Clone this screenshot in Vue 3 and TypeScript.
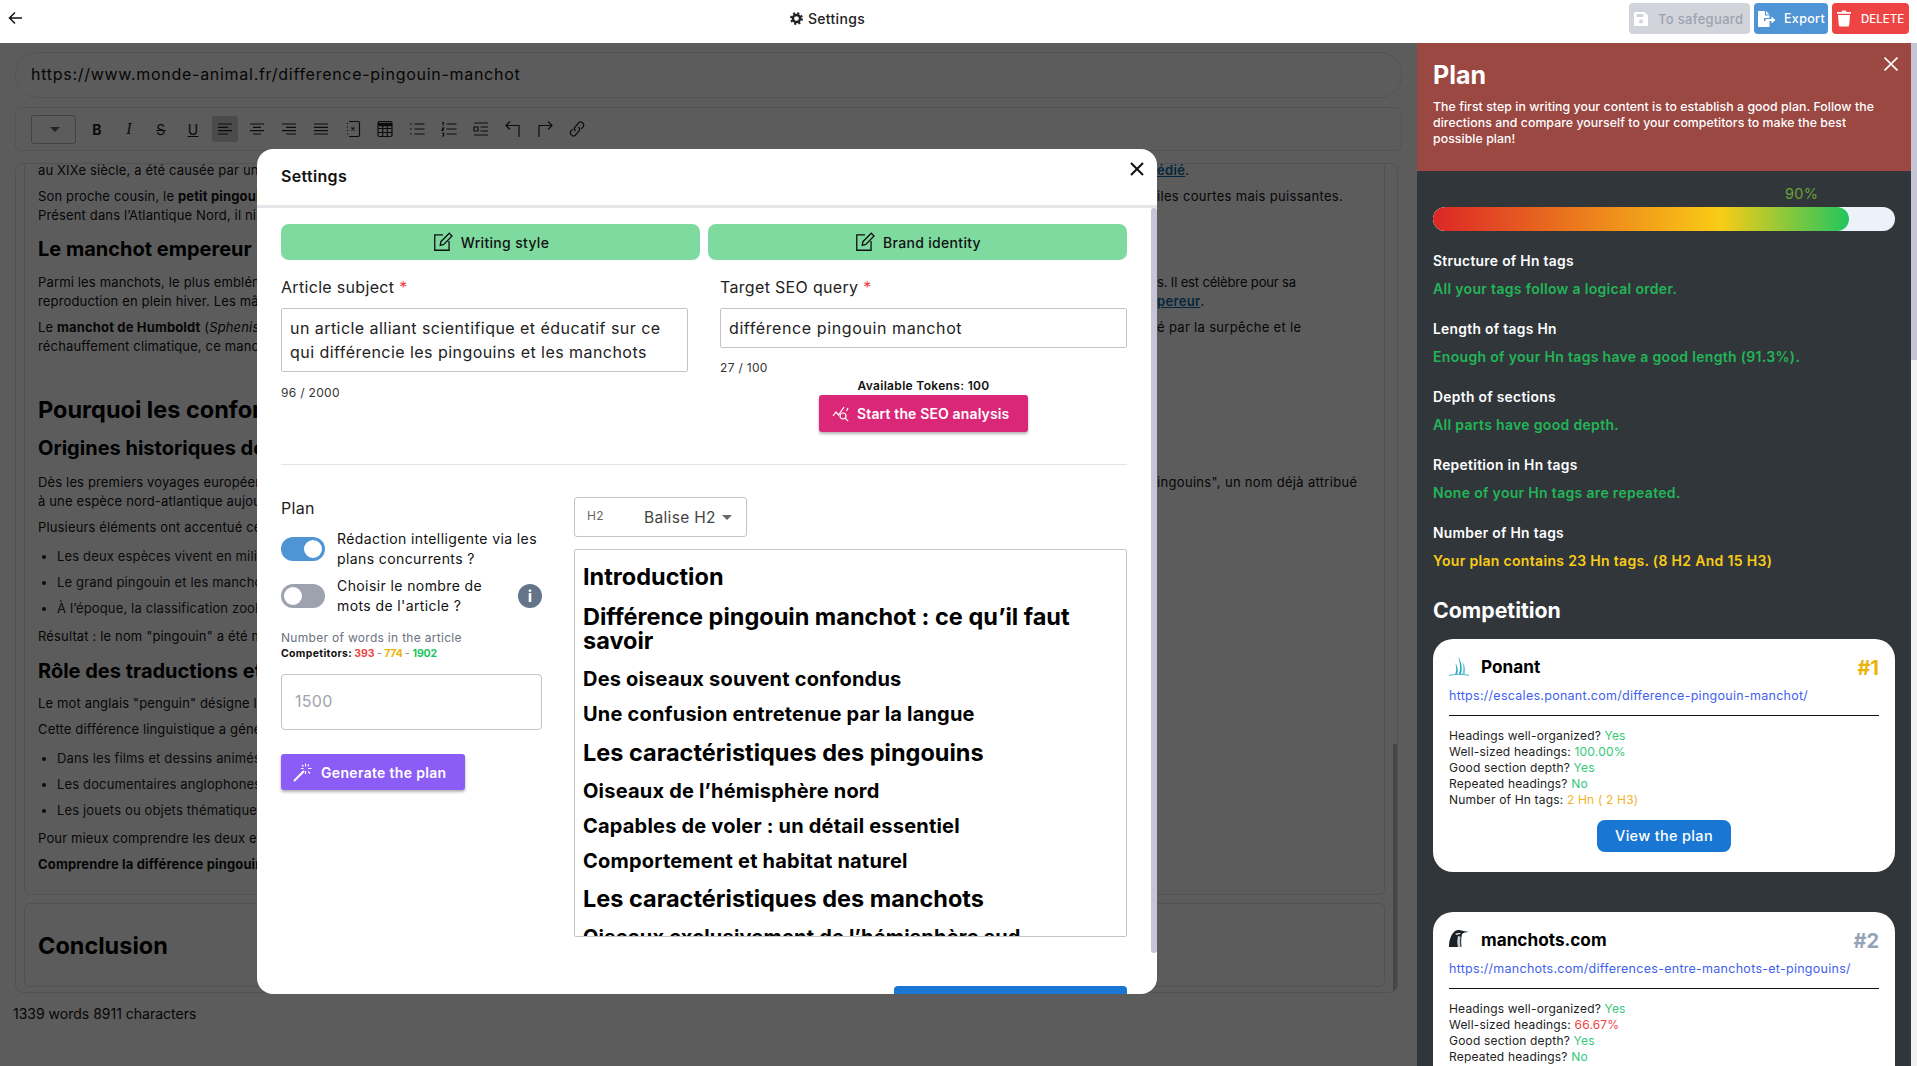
<script setup lang="ts">
const tools: string[] = [
    'M5 7h14M5 10.3h10M5 13.6h14M5 17h10',
    'M5 7h14M8 10.3h8M5 13.6h14M8 17h8',
    'M5 7h14M9 10.3h10M5 13.6h14M9 17h10',
    'M5 7h14M5 10.3h14M5 13.6h14M5 17h14',
    'M8 4.5h9a1.5 1.5 0 0 1 1.5 1.5v12a1.5 1.5 0 0 1-1.5 1.5H8M6.5 6v1M6.5 9.5v1M6.5 13v1M6.5 16.5v1M10.5 10.5l3 3M13.5 10.5l-3 3',
]
const tools2: string[] = [
    'M9.5 7h10M9.5 12h10M9.5 17h10M5 7h1.6M5 12h1.6M5 17h1.6',
    'M9.5 7h10M9.5 12h10M9.5 17h10M5 5.5h1.2v3M5 11h1.6l-1.6 2.4h1.6M5 16h1.6v3H5',
    'M5 6h14M11.5 10h7.5M11.5 14h7.5M5 18h14M5 10h4v4H5z',
    'M9 4.5L5 8.5l4 4M5 8.5h13V20',
    'M15 4.5l4 4-4 4M19 8.5H6V20',
    'M10.5 14a3 3 0 0 1-.4-4.2l3.6-4a3 3 0 0 1 4.4 4l-1.8 2M13.5 10a3 3 0 0 1 .4 4.2l-3.6 4a3 3 0 0 1-4.4-4l1.8-2',
]

const tags: { level: number, text: string }[] = [
    { level: 2, text: 'Introduction' },
    { level: 2, text: 'Différence pingouin manchot : ce qu’il faut savoir' },
    { level: 3, text: 'Des oiseaux souvent confondus' },
    { level: 3, text: 'Une confusion entretenue par la langue' },
    { level: 2, text: 'Les caractéristiques des pingouins' },
    { level: 3, text: 'Oiseaux de l’hémisphère nord' },
    { level: 3, text: 'Capables de voler : un détail essentiel' },
    { level: 3, text: 'Comportement et habitat naturel' },
    { level: 2, text: 'Les caractéristiques des manchots' },
    { level: 3, text: 'Oiseaux exclusivement de l’hémisphère sud' },
]

const criteria = [
    { title: 'Structure of Hn tags', text: 'All your tags follow a logical order.', tone: 'good' },
    { title: 'Length of tags Hn', text: 'Enough of your Hn tags have a good length (91.3%).', tone: 'good' },
    { title: 'Depth of sections', text: 'All parts have good depth.', tone: 'good' },
    { title: 'Repetition in Hn tags', text: 'None of your Hn tags are repeated.', tone: 'good' },
    { title: 'Number of Hn tags', text: 'Your plan contains 23 Hn tags. (8 H2 And 15 H3)', tone: 'warn' },
]

const competitors = [
    {
        name: 'Ponant', rank: '#1', rankClass: 'gold', logo: 'ponant',
        url: 'https://escales.ponant.com/difference-pingouin-manchot/',
        sized: '100.00%', sizedClass: 'yes', hn: '2 Hn ( 2 H3)', button: true,
    },
    {
        name: 'manchots.com', rank: '#2', rankClass: 'silver', logo: 'penguin',
        url: 'https://manchots.com/differences-entre-manchots-et-pingouins/',
        sized: '66.67%', sizedClass: 'bad', hn: '6 Hn ( 6 H2)', button: false,
    },
]
</script>

<template>
    <div class="page">
        <header class="topbar">
            <button class="back" type="button" aria-label="Back">
                <svg width="16" height="16" viewBox="0 0 16 16" fill="none" stroke="#111" stroke-width="1.5"><path d="M8 2.5L2.5 8 8 13.5M2.5 8H15"/></svg>
            </button>
            <div class="page-title">
                <svg width="13" height="13" viewBox="0 0 16 16"><circle cx="8" cy="8" r="4.4" fill="none" stroke="#222" stroke-width="3"/><circle cx="8" cy="8" r="6.6" fill="none" stroke="#222" stroke-width="2.6" stroke-dasharray="2.6 2.6"/></svg>
                <span>Settings</span>
            </div>
            <div class="actions">
                <button class="act act-save" type="button">
                    <svg width="16" height="16" viewBox="0 0 16 16"><path fill="#fff" d="M1 2.5A1.5 1.5 0 0 1 2.5 1h9L15 4.5v9a1.5 1.5 0 0 1-1.5 1.5h-11A1.5 1.5 0 0 1 1 13.500z"/><rect x="3.500" y="3" width="7" height="3" fill="#d1d5db"/><circle cx="8" cy="10.500" r="2" fill="#d1d5db"/></svg>
                    To safeguard
                </button>
                <button class="act act-export" type="button">
                    <svg width="19" height="16" viewBox="0 0 19 16"><path fill="#fff" d="M1 0h7v4.500h4.500V7H7v3h5.500v6H1zM9 0l3.500 3.500H9zM8.500 8h6V5.500l4 3.500-4 3.500V10h-6z"/></svg>
                    Export
                </button>
                <button class="act act-delete" type="button">
                    <svg width="16" height="17" viewBox="0 0 16 17"><path fill="#fff" d="M1 2h4.500l.7-1.500h3.600l.7 1.500H15v1.800H1zM2 5h12l-.8 10.500a1.500 1.500 0 0 1-1.500 1H4.300a1.500 1.500 0 0 1-1.500-1z"/></svg>
                    DELETE
                </button>
            </div>
        </header>

        <div class="workspace">
            <main class="content">
                <div class="url-field">https://www.monde-animal.fr/difference-pingouin-manchot</div>

                <div class="toolbar">
                    <div class="tb-select"><i class="caret"></i></div>
                    <span class="tb-btn tb-b">B</span>
                    <span class="tb-btn tb-i">I</span>
                    <span class="tb-btn tb-s">S</span>
                    <span class="tb-btn tb-u">U</span>
                    <span v-for="(d, i) in tools" :key="d" class="tb-btn" :class="{ active: i === 0 }">
                        <svg width="24" height="24" viewBox="0 0 24 24" fill="none" stroke="#222" stroke-width="1.2"><path :d="d"/></svg>
                    </span>
                    <span class="tb-btn">
                        <svg width="24" height="24" viewBox="0 0 24 24" fill="none" stroke="#222" stroke-width="1.2"><rect x="5" y="4.500" width="14" height="15" rx="1.500"/><path d="M5 7.500h14" stroke-width="3.500"/><path d="M5 11.500h14M5 15.500h14M9.700 6v13.500M14.300 6v13.500"/></svg>
                    </span>
                    <span v-for="d in tools2" :key="d" class="tb-btn">
                        <svg width="24" height="24" viewBox="0 0 24 24" fill="none" stroke="#222" stroke-width="1.2"><path :d="d"/></svg>
                    </span>
                </div>

                <div class="editor">
                    <section class="doc doc-main">
                        <div class="ln first"><span>au XIXe siècle, a été causée par un</span><span class="rest"><a>édié</a>.</span></div>
                        <div class="para">
                            <div class="ln"><span>Son proche cousin, le <b>petit pingouin</b></span><span class="rest">iles courtes mais puissantes.</span></div>
                            <div class="ln"><span>Présent dans l’Atlantique Nord, il niche</span></div>
                        </div>
                        <h3>Le manchot empereur</h3>
                        <div class="para">
                            <div class="ln"><span>Parmi les manchots, le plus emblématique</span><span class="rest narrow">s. Il est célèbre pour sa</span></div>
                            <div class="ln"><span>reproduction en plein hiver. Les mâles</span><span class="rest"><a>pereur</a>.</span></div>
                        </div>
                        <div class="para">
                            <div class="ln"><span>Le <b>manchot de Humboldt</b> (<em>Spheniscus</em></span><span class="rest">é par la surpêche et le</span></div>
                            <div class="ln"><span>réchauffement climatique, ce manchot</span></div>
                        </div>
                        <h2>Pourquoi les confond-on</h2>
                        <h3 class="tight">Origines historiques de la</h3>
                        <div class="para">
                            <div class="ln"><span>Dès les premiers voyages européens</span><span class="rest">ingouins", un nom déjà attribué</span></div>
                            <div class="ln"><span>à une espèce nord-atlantique aujourd’hui</span></div>
                        </div>
                        <p>Plusieurs éléments ont accentué cette</p>
                        <ul>
                            <li>Les deux espèces vivent en milieu</li>
                            <li>Le grand pingouin et les manchots</li>
                            <li>À l’époque, la classification zoologique</li>
                        </ul>
                        <p>Résultat : le nom "pingouin" a été maintenu</p>
                        <h3>Rôle des traductions et</h3>
                        <p class="after-title">Le mot anglais "penguin" désigne les</p>
                        <p>Cette différence linguistique a généré</p>
                        <ul>
                            <li>Dans les films et dessins animés</li>
                            <li>Les documentaires anglophones</li>
                            <li>Les jouets ou objets thématiques</li>
                        </ul>
                        <p>Pour mieux comprendre les deux espèces</p>
                        <p><b>Comprendre la différence pingouin</b></p>
                    </section>
                    <section class="doc doc-end">
                        <h2>Conclusion</h2>
                    </section>
                    <div class="editor-thumb"></div>
                </div>

                <div class="word-count">1339 words 8911 characters</div>

                <div class="backdrop"></div>

                <div class="modal">
                    <div class="modal-head">
                        <h4>Settings</h4>
                        <svg class="modal-close" width="14" height="14" viewBox="0 0 14 14" stroke="#111" stroke-width="2"><path d="M1 1l12 12M13 1L1 13"/></svg>
                    </div>
                    <div class="modal-thumb"></div>
                    <div class="modal-body">
                        <div class="tabs">
                            <button v-for="t in ['Writing style', 'Brand identity']" :key="t" class="tab" type="button">
                                <svg width="22" height="22" viewBox="0 0 20 20" fill="none" stroke="#111" stroke-width="1.200"><path d="M10 3.500H2.500v14h13V9"/><path d="M7.500 13l.6-3.300 7.600-7.700 2.500 2.500-7.500 7.700z"/></svg>
                                {{ t }}
                            </button>
                        </div>

                        <div class="fields">
                            <div>
                                <label class="field-label">Article subject <em>*</em></label>
                                <div class="box box-area">un article alliant scientifique et éducatif sur ce<br>qui différencie les pingouins et les manchots</div>
                                <div class="counter counter-a">96 / 2000</div>
                            </div>
                            <div>
                                <label class="field-label">Target SEO query <em>*</em></label>
                                <div class="box box-line">différence pingouin manchot</div>
                                <div class="counter">27 / 100</div>
                                <div class="tokens">Available Tokens: 100</div>
                                <button class="seo-btn" type="button">
                                    <svg width="18" height="18" viewBox="0 0 18 18" fill="none" stroke="#fff" stroke-width="1.200"><path d="M1 11l3-4 2.500 3L12 2"/><circle cx="11" cy="11" r="3"/><path d="M13.200 13.200l3 3M14.500 6l1.500-3"/></svg>
                                    Start the SEO analysis
                                </button>
                            </div>
                        </div>

                        <hr class="divider">

                        <div class="plan-grid">
                            <div>
                                <div class="plan-label">Plan</div>
                                <div class="toggle-row">
                                    <span class="toggle on"><i></i></span>
                                    <span class="toggle-text">Rédaction intelligente via les<br>plans concurrents ?</span>
                                </div>
                                <div class="toggle-row second">
                                    <span class="toggle"><i></i></span>
                                    <span class="toggle-text">Choisir le nombre de<br>mots de l'article ?</span>
                                    <span class="info">i</span>
                                </div>
                                <div class="words-label">Number of words in the article</div>
                                <div class="competitors"><b>Competitors:</b> <b class="c-red">393</b> <span>-</span> <b class="c-gold">774</b> <span>-</span> <b class="c-green">1902</b></div>
                                <div class="box-num">1500</div>
                                <button class="gen-btn" type="button">
                                    <svg width="20" height="20" viewBox="0 0 20 20" fill="none" stroke="#fff"><path d="M1.500 18.500l9-9" stroke-width="2" stroke-linecap="round"/><path d="M12.500 1.500v3M12.500 9v3M8 6.500h2.500M15 6.500h3.500M9 3l1.500 1.500M16 2.500l-1.500 1.500M15 9.500l2 2" stroke-width="1.100"/></svg>
                                    Generate the plan
                                </button>
                            </div>
                            <div>
                                <div class="tag-select">
                                    <span class="tag-code">H2</span>
                                    <span class="tag-name">Balise H2</span>
                                    <i class="caret"></i>
                                </div>
                                <div class="outline">
                                    <div v-for="t in tags" :key="t.text" :class="`lvl${t.level}`">{{ t.text }}</div>
                                </div>
                            </div>
                        </div>

                        <div class="modal-foot">
                            <button class="next-btn" type="button"><i></i></button>
                        </div>
                    </div>
                </div>
            </main>

            <aside class="panel">
                <div class="panel-main">
                    <div class="panel-head">
                        <h1>Plan</h1>
                        <p>The first step in writing your content is to establish a good plan. Follow the directions and compare yourself to your competitors to make the best possible plan!</p>
                        <svg class="panel-close" width="14" height="14" viewBox="0 0 14 14" stroke="#fff" stroke-width="1.600"><path d="M.5.5l13 13M13.500.5l-13 13"/></svg>
                    </div>
                    <div class="panel-body">
                        <div class="pct">90%</div>
                        <div class="bar"><div class="bar-fill" :style="{ width: '90%' }"></div></div>

                        <div v-for="c in criteria" :key="c.title" class="crit">
                            <div class="crit-title">{{ c.title }}</div>
                            <div class="crit-text" :class="c.tone">{{ c.text }}</div>
                        </div>

                        <h2 class="comp-title">Competition</h2>

                        <article v-for="c in competitors" :key="c.name" class="card">
                            <div class="card-top">
                                <svg v-if="c.logo === 'ponant'" width="20" height="20" viewBox="0 0 20 20" fill="none">
                                    <path d="M0 19.300c6-1.200 13-1.200 20 0" stroke="#4fb8c8" stroke-width="1"/>
                                    <path d="M10 18c1.800-4 1.500-11-1-17.500 3.500 5 4.500 12 3 17.500z" fill="#1f9fb8"/>
                                    <path d="M6.300 18c1.200-3 1.200-7 0-11 2.600 3.500 3 7.500 2 11z" fill="#2fb0c6"/>
                                    <path d="M13.300 18c1.400-3 1.400-7-.2-12.500 3.200 4.500 3.600 9 2.500 12.500z" fill="#6ccad6"/>
                                </svg>
                                <svg v-else width="20" height="20" viewBox="0 0 20 20">
                                    <path d="M0 18c0-5 1-11 5-15 2-2 5-2.500 7-1.500 2 .5 5 .8 7.500 1.500-3 .2-5 .8-6.500 2-1 4-1 9-.5 13z" fill="#1c2226"/>
                                    <path d="M6 5c2-1 5-1.500 6-.5-1 .7-3 .8-4 1.500z" fill="#e8eaec"/>
                                    <path d="M9 7c1 0 2 .5 2.500 1-.5 3-.5 6 0 10H9c-1-3-1-7 0-11z" fill="#c9ced2"/>
                                </svg>
                                <span class="card-name">{{ c.name }}</span>
                                <span class="card-rank" :class="c.rankClass">{{ c.rank }}</span>
                            </div>
                            <a class="card-url">{{ c.url }}</a>
                            <hr>
                            <div class="card-stats">
                                <div>Headings well-organized? <span class="yes">Yes</span></div>
                                <div>Well-sized headings: <span :class="c.sizedClass">{{ c.sized }}</span></div>
                                <div>Good section depth? <span class="yes">Yes</span></div>
                                <div>Repeated headings? <span class="yes">No</span></div>
                                <div>Number of Hn tags: <span class="amber">{{ c.hn }}</span></div>
                            </div>
                            <button v-if="c.button" class="view-btn" type="button">View the plan</button>
                        </article>
                    </div>
                </div>
                <div class="panel-scroll"><div></div></div>
            </aside>
        </div>
    </div>
</template>

<style>
html, body { margin: 0; padding: 0; background: #fff; overflow: hidden; }
</style>

<style scoped>
.page {
    height: 1066px;
    display: flex;
    flex-direction: column;
    overflow: hidden;
    font-family: Inter, "Noto Sans", sans-serif;
    letter-spacing: .02em;
    color: #111;
}
button { font-family: inherit; letter-spacing: inherit; border: none; cursor: pointer; }
svg { flex: none; }

/* top bar */
.topbar {
    height: 43px;
    box-sizing: border-box;
    flex: none;
    display: flex;
    align-items: center;
    justify-content: space-between;
    background: #fff;
    padding: 0 8px 6px 7px;
}
.back { background: none; padding: 0; width: 17px; height: 17px; display: flex; }
.page-title { display: flex; align-items: center; gap: 5px; font-size: 14px; font-weight: 500; color: #222; margin-left: 2px; }
.actions { display: flex; gap: 4px; }
.act {
    height: 31px;
    display: flex;
    align-items: center;
    padding: 0 4px;
    border-radius: 4px;
    font-size: 12.500px;
    font-weight: 500;
    color: #fff;
}
.act-save { width: 121px; background: #d1d5db; color: #9ca3af; gap: 9px; font-size: 13px; }
.act-export { width: 74px; padding-left: 3px; background: #4f94d4; gap: 8px; }
.act-delete { width: 77px; background: #ef4444; gap: 9px; font-size: 11.500px; letter-spacing: 0; }

.workspace { flex: 1; display: flex; min-height: 0; }

/* left side */
.content {
    width: 1417px;
    flex: none;
    position: relative;
    overflow: hidden;
    background: #fff;
    padding: 9px 15px 0;
    box-sizing: border-box;
    font-size: 13px;
}
.url-field {
    height: 46px;
    box-sizing: border-box;
    width: 1387px;
    border: 1px solid #e5e7eb;
    border-radius: 22px;
    padding: 0 15px 2px;
    display: flex;
    align-items: center;
    font-size: 16px;
    letter-spacing: .72px;
    color: #111;
}
.toolbar {
    margin-top: 9px;
    height: 44px;
    width: 1387px;
    box-sizing: border-box;
    border: 1px solid #e5e7eb;
    border-radius: 6px;
    padding: 0 15px;
    display: flex;
    align-items: center;
    gap: 6px;
}
.tb-select {
    width: 45px;
    height: 29px;
    box-sizing: border-box;
    border: 1px solid #bbb;
    border-radius: 3px;
    margin-right: 2px;
    display: flex;
    align-items: center;
    justify-content: flex-end;
    padding-right: 15px;
}
.caret {
    width: 0;
    height: 0;
    border-left: 5px solid transparent;
    border-right: 5px solid transparent;
    border-top: 5px solid #666;
}
.tb-btn {
    width: 26px;
    height: 26px;
    border-radius: 3px;
    display: flex;
    align-items: center;
    justify-content: center;
    font-size: 14px;
    color: #222;
}
.tb-btn.active { background: #cfcfcf; }
.tb-b { font-weight: 700; }
.tb-i { font-style: italic; font-family: "Liberation Serif", serif; font-size: 16px; }
.tb-s { text-decoration: line-through; }
.tb-u { text-decoration: underline; }

.editor {
    margin-top: 12px;
    width: 1383px;
    height: 830px;
    box-sizing: border-box;
    border: 1px solid #e0e2e6;
    border-radius: 8px;
    padding: 0 12px 5px 8px;
    display: flex;
    flex-direction: column;
    gap: 8px;
    position: relative;
    overflow: hidden;
    line-height: 19px;
    color: #111;
}
.editor-thumb {
    position: absolute;
    right: -2px;
    top: 580px;
    width: 6px;
    height: 251px;
    background: #c4c4c4;
}
.doc { border: 1px solid #e0e2e6; border-radius: 6px; padding: 0 13px; box-sizing: border-box; }
.doc-main { height: 732px; border-top: none; border-radius: 0 0 6px 6px; overflow: hidden; }
.doc-end { height: 84px; display: flex; align-items: center; padding-top: 2px; }
.doc h2 { margin: 36px 0 0; font-size: 23.500px; line-height: 36px; font-weight: 700; color: #000; letter-spacing: 0; white-space: nowrap; }
.doc-end h2 { margin: 0; }
.doc h3 { margin: 10px 0 0; font-size: 20px; line-height: 30px; font-weight: 700; color: #000; letter-spacing: 0; white-space: nowrap; }
.doc h3.tight { margin-top: 5px; }
.doc p { margin: 7px 0 0; white-space: nowrap; letter-spacing: .15px; }
.doc ul + p { margin-top: 9px; }
.doc p.after-title { margin-top: 8px; }
.doc h3 + .para { margin-top: 9px; }
.doc h2 + h3 + .para { margin-top: 10px; }
.para { margin-top: 7px; }
.doc .para + h3 { margin-top: 9px; }
.ln { display: grid; grid-template-columns: 1119px auto; white-space: nowrap; }
.ln > span:first-child { letter-spacing: .15px; }
.ln.first { margin-top: -3px; }
.rest a { color: #0b6aa8; font-weight: 600; text-decoration: underline; }
.rest.narrow { letter-spacing: -.15px; }
.doc ul { margin: 10px 0 0; padding: 0 0 0 19px; color: #222; letter-spacing: .15px; }
.doc li { margin-top: 7px; white-space: nowrap; }
.doc li:first-child { margin-top: 0; }
.doc li::marker { font-size: 12px; }
.word-count { margin-top: 11px; margin-left: -2px; font-size: 14px; line-height: 20px; letter-spacing: 0; color: #111; }

.backdrop { position: absolute; inset: 0; background: rgba(0, 0, 0, .64); }

/* modal */
.modal {
    position: absolute;
    left: 257px;
    top: 106px;
    width: 900px;
    height: 845px;
    background: #fff;
    border-radius: 16px;
    overflow: hidden;
    font-size: 14px;
    color: #111;
}
.modal-head {
    height: 56px;
    border-bottom: 3px solid #e5e5ea;
    display: flex;
    align-items: center;
    justify-content: space-between;
    padding: 0 13px 0 24px;
}
.modal-head h4 { margin: 0 0 2px; font-size: 16px; font-weight: 600; }
.modal-close { margin-bottom: 17px; }
.modal-thumb { position: absolute; right: 0; top: 59px; width: 6px; height: 745px; background: #c5c5d5; border-radius: 3px; }
.modal-body { padding: 16px 30px 0 24px; }
.tabs { display: grid; grid-template-columns: 1fr 1fr; gap: 8px; }
.tab {
    height: 36px;
    background: #7fda9f;
    border-radius: 8px;
    display: flex;
    align-items: center;
    justify-content: center;
    gap: 7px;
    font-size: 14px;
    font-weight: 500;
    color: #111;
}
.fields { display: grid; grid-template-columns: 407px 407px; gap: 32px; margin-top: 15px; }
.field-label { display: block; font-size: 16px; line-height: 24px; color: #222; }
.field-label em { color: #ef4444; font-style: normal; }
.box {
    margin-top: 9px;
    box-sizing: border-box;
    border: 1px solid #c4c4c4;
    border-radius: 2px;
    padding: 7px 8px;
    font-size: 16px;
    line-height: 24px;
    color: #222;
}
.box-area { height: 64px; white-space: nowrap; letter-spacing: .45px; }
.box-line { height: 40px; letter-spacing: .6px; }
.counter { margin-top: 11px; font-size: 12px; line-height: 18px; color: #333; }
.counter-a { margin-top: 12px; }
.tokens { font-size: 12px; line-height: 18px; font-weight: 600; text-align: center; color: #111; }
.seo-btn {
    display: flex;
    align-items: center;
    gap: 7px;
    width: 209px;
    height: 37px;
    margin: 0 auto;
    padding: 0 13px;
    background: #db2777;
    border-radius: 3px;
    color: #fff;
    font-size: 14px;
    font-weight: 600;
    letter-spacing: .01em;
    box-shadow: 0 2px 3px rgba(0, 0, 0, .3);
}
.divider { margin: 32px 0 0; border: none; height: 1px; background: #e5e5e5; }
.plan-grid { display: grid; grid-template-columns: 261px 553px; gap: 32px; margin-top: 32px; }
.plan-label { font-size: 16px; line-height: 22px; color: #222; }
.toggle-row { display: flex; align-items: center; gap: 12px; margin-top: 10px; }
.toggle-row.second { margin-top: 7px; }
.toggle {
    flex: none;
    width: 44px;
    height: 24px;
    box-sizing: border-box;
    border-radius: 12px;
    background: #9ca3af;
    display: flex;
    align-items: center;
    padding: 0 3px;
}
.toggle i { width: 18px; height: 18px; border-radius: 50%; background: #fff; }
.toggle.on { background: #4f94d4; justify-content: flex-end; }
.toggle-text { font-size: 14px; line-height: 20px; letter-spacing: .4px; color: #111; white-space: nowrap; }
.info {
    margin-left: auto;
    width: 24px;
    height: 24px;
    border-radius: 50%;
    background: #64748b;
    color: #fff;
    font-weight: 700;
    font-size: 16px;
    display: flex;
    align-items: center;
    justify-content: center;
}
.words-label { margin-top: 14px; font-size: 12px; line-height: 16px; color: #6b7280; letter-spacing: .3px; }
.competitors { font-size: 10.500px; line-height: 16px; color: #111; word-spacing: -1px; }
.competitors .c-red, .competitors .c-gold, .competitors .c-green { letter-spacing: -.1px; }
.competitors span { color: #888; }
.c-red { color: #ef4444; }
.c-gold { color: #eab308; }
.c-green { color: #22c55e; }
.box-num {
    margin-top: 12px;
    height: 56px;
    box-sizing: border-box;
    border: 1px solid #c4c4c4;
    border-radius: 4px;
    padding: 0 13px 3px;
    display: flex;
    align-items: center;
    font-size: 16px;
    color: #a3a3aa;
}
.gen-btn {
    margin-top: 24px;
    display: flex;
    align-items: center;
    gap: 8px;
    width: 184px;
    height: 36px;
    padding: 0 12px;
    background: #8b5cf6;
    border-radius: 3px;
    color: #fff;
    font-size: 14px;
    font-weight: 600;
    box-shadow: 0 2px 3px rgba(0, 0, 0, .3);
}
.tag-select {
    width: 173px;
    height: 40px;
    box-sizing: border-box;
    border: 1px solid #c4c4c4;
    border-radius: 3px;
    display: flex;
    align-items: center;
    padding: 0 14px 0 12px;
}
.tag-code { font-size: 12px; color: #666; width: 57px; margin-bottom: 4px; }
.tag-name { font-size: 15.500px; color: #444; flex: 1; white-space: nowrap; }
.outline {
    margin-top: 12px;
    height: 388px;
    box-sizing: border-box;
    border: 1px solid #c4c4c4;
    border-radius: 2px;
    padding: 0 8px;
    overflow: hidden;
    color: #000;
}
.lvl2 { margin-top: 14.500px; font-size: 23.500px; line-height: 24px; font-weight: 700; letter-spacing: 0; }
.lvl3 { margin-top: 11px; font-size: 20px; line-height: 24px; font-weight: 700; letter-spacing: .01em; white-space: nowrap; }
.lvl2:first-child { margin-top: 15px; }
.lvl2 + .lvl2 { margin-top: 16px; }
.lvl2 + .lvl3 { margin-top: 14px; }
.modal-foot { margin-top: 49px; display: flex; justify-content: flex-end; }
.next-btn { width: 233px; height: 40px; background: #1976d2; border-radius: 4px; padding: 5px 0 0 12px; display: block; text-align: left; }
.next-btn i { display: block; width: 2px; height: 5px; background: #fff; }

/* right side */
.panel { flex: 1; display: flex; min-width: 0; }
.panel-main { width: 494px; flex: none; background: #31363b; overflow: hidden; }
.panel-scroll { flex: 1; background: #f1f1f1; }
.panel-scroll div { height: 317px; background: #c5c5d5; }
.panel-head { position: relative; height: 128px; box-sizing: border-box; padding: 16px 16px 0; background: #9b4742; color: #fff; }
.panel-head h1 { margin: 0; font-size: 25px; line-height: 32px; font-weight: 700; letter-spacing: 0; }
.panel-head p { margin: 8px 0 0; font-size: 12.300px; line-height: 16px; font-weight: 500; letter-spacing: .005em; }
.panel-close { position: absolute; right: 13px; top: 14px; }
.panel-body { padding: 13px 16px 0; color: #fff; }
.pct { margin-left: 352px; font-size: 14.500px; line-height: 20px; color: #6aa03a; }
.bar { margin-top: 3px; height: 24px; border-radius: 12px; background: #edf1f9; overflow: hidden; }
.bar-fill {
    height: 100%;
    border-radius: 12px;
    background: linear-gradient(90deg, #dc2626 0%, #facc15 69%, #22c55e 100%);
}
.crit { margin-top: 20px; }
.crit-title { font-size: 13.800px; line-height: 20px; font-weight: 600; }
.crit-text { margin-top: 8px; font-size: 14px; line-height: 20px; font-weight: 600; }
.crit-text.good { color: #22b556; }
.crit-text.warn { color: #facc15; }
.comp-title { margin: 24px 0 0; font-size: 21.300px; line-height: 30px; font-weight: 700; letter-spacing: 0; }
.card {
    margin-top: 14px;
    margin-bottom: 40px;
    padding: 15px 16px 20px;
    background: #fff;
    border-radius: 20px;
    color: #222;
}
.card + .card { margin-top: 0; }
.card-top { display: flex; align-items: center; gap: 12px; height: 24px; }
.card-name { font-size: 17.200px; font-weight: 700; color: #000; letter-spacing: 0; flex: 1; }
.card-rank { font-size: 20px; font-weight: 700; margin-top: 3px; letter-spacing: 0; }
.gold { color: #eab308; }
.silver { color: #94a3b8; }
.card-url { display: block; margin-top: 8px; font-size: 12.500px; line-height: 20px; color: #3f5ff0; letter-spacing: .022em; white-space: nowrap; }
.card hr { margin: 9px 0 0; border: none; height: 1px; background: #111; }
.card-stats { margin-top: 12px; font-size: 12px; line-height: 16px; letter-spacing: .015em; }
.yes { color: #34c77b; }
.bad { color: #ef4444; }
.amber { color: #f0b429; }
.view-btn {
    display: block;
    margin: 12px auto 0;
    width: 134px;
    height: 32px;
    padding-bottom: 2px;
    background: #1976d2;
    border-radius: 8px;
    color: #fff;
    font-size: 14.500px;
    font-weight: 500;
}
</style>
